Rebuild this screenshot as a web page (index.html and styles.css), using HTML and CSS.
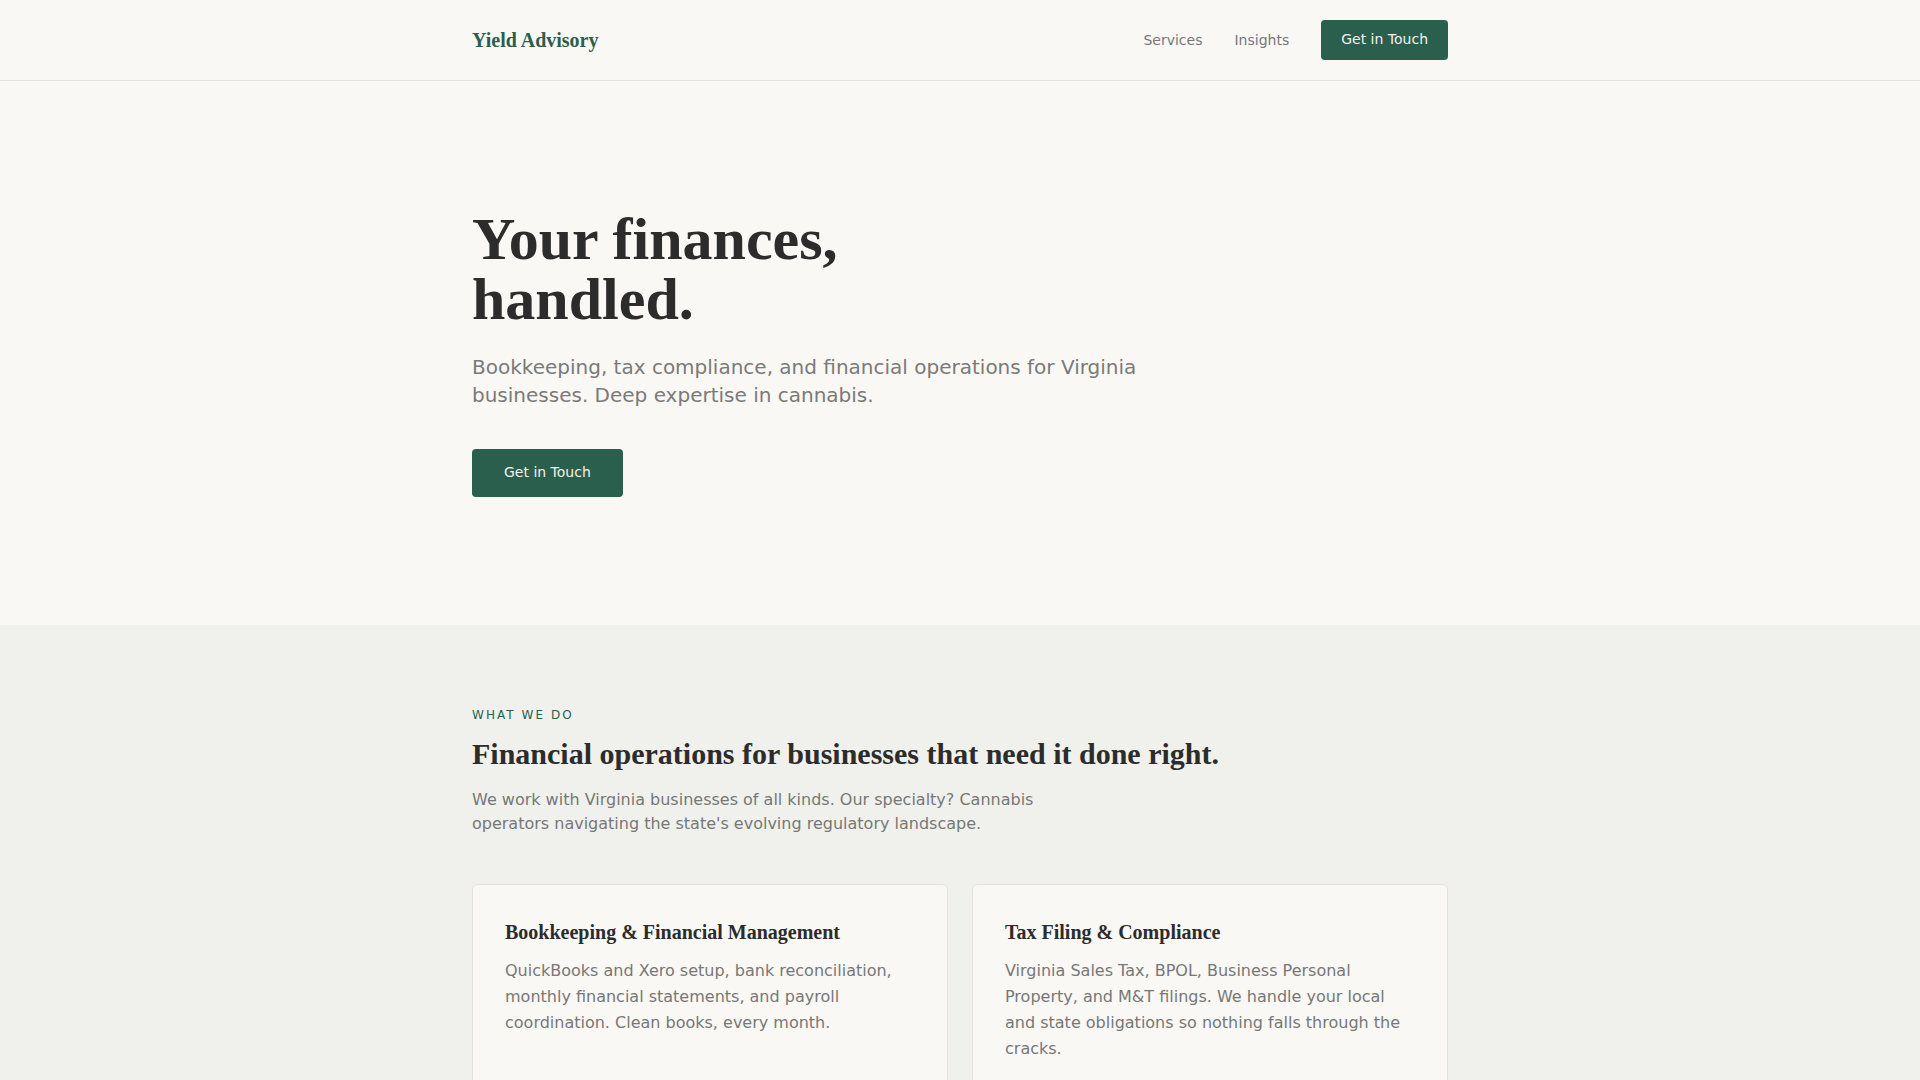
FILE: index.html
```html
<!DOCTYPE html>
<html lang="en">
<head>
<meta charset="utf-8">
<title>Yield Advisory</title>
<link rel="stylesheet" href="styles.css">
</head>
<body>
<header class="site-header">
  <div class="container header-inner">
    <a class="logo" href="#">Yield Advisory</a>
    <nav class="nav">
      <a class="nav-link" href="#">Services</a>
      <a class="nav-link" href="#">Insights</a>
      <a class="btn btn-sm" href="#">Get in Touch</a>
    </nav>
  </div>
</header>
<main>
  <section class="hero">
    <div class="container">
      <h1 class="hero-title">Your finances,<br>handled.</h1>
      <p class="hero-sub">Bookkeeping, tax compliance, and financial operations for Virginia businesses. Deep expertise in cannabis.</p>
      <a class="btn btn-lg" href="#">Get in Touch</a>
    </div>
  </section>
  <section class="services">
    <div class="container">
      <p class="eyebrow">WHAT WE DO</p>
      <h2 class="section-title">Financial operations for businesses that need it done right.</h2>
      <p class="section-intro">We work with Virginia businesses of all kinds. Our specialty? Cannabis operators navigating the state's evolving regulatory landscape.</p>
      <div class="cards">
        <div class="card">
          <h3 class="card-title">Bookkeeping &amp; Financial Management</h3>
          <p class="card-text">QuickBooks and Xero setup, bank reconciliation, monthly financial statements, and payroll coordination. Clean books, every month.</p>
        </div>
        <div class="card">
          <h3 class="card-title">Tax Filing &amp; Compliance</h3>
          <p class="card-text">Virginia Sales Tax, BPOL, Business Personal Property, and M&amp;T filings. We handle your local and state obligations so nothing falls through the cracks.</p>
        </div>
      </div>
    </div>
  </section>
</main>
</body>
</html>
```

FILE: styles.css
```css
* { box-sizing: border-box; }
html, body { margin: 0; padding: 0; }
body {
  background: #faf8f4;
  color: #2c2c2c;
  font-family: "DejaVu Sans", sans-serif;
}
a { text-decoration: none; }
.container {
  width: 976px;
  margin: 0 auto;
}
.site-header {
  border-bottom: 1px solid #e6e3dc;
  background: #faf8f4;
}
.header-inner {
  display: flex;
  align-items: center;
  justify-content: space-between;
  height: 80px;
}
.logo {
  font-family: "Liberation Serif", serif;
  font-weight: 700;
  font-size: 20px;
  color: #2b5f4d;
}
.nav {
  display: flex;
  align-items: center;
  gap: 32px;
}
.nav-link {
  font-size: 14px;
  color: #777;
}
.btn {
  display: inline-block;
  background: #2b5f4d;
  color: #f4f1ea;
  border-radius: 4px;
  font-size: 14px;
  line-height: 1.4;
}
.btn-sm { padding: 10px 20px; }
.btn-lg { padding: 14px 32px; }
.hero {
  padding: 128px 0;
}
.hero-title {
  margin: 0;
  font-family: "Liberation Serif", serif;
  font-weight: 700;
  font-size: 60px;
  line-height: 60px;
  color: #2c2c2c;
}
.hero-sub {
  margin: 24px 0 40px;
  max-width: 720px;
  font-size: 20px;
  line-height: 1.4;
  color: #7a7a7a;
}
.services {
  background: #f0f1ec;
  padding: 81px 0 80px;
}
.eyebrow {
  margin: 0;
  font-size: 12px;
  line-height: 18px;
  letter-spacing: 0.17em;
  color: #2b5f4d;
}
.section-title {
  margin: 12px 0 0;
  font-family: "Liberation Serif", serif;
  font-weight: 700;
  font-size: 30px;
  line-height: 36px;
  color: #2c2c2c;
}
.section-intro {
  margin: 16px 0 0;
  max-width: 600px;
  font-size: 16px;
  line-height: 24px;
  color: #777;
}
.cards {
  margin-top: 48px;
  display: grid;
  grid-template-columns: 1fr 1fr;
  gap: 24px;
}
.card {
  background: #faf8f4;
  border: 1px solid #e4e1da;
  border-radius: 6px;
  padding: 33px 32px 40px;
}
.card-title {
  margin: 0;
  font-family: "Liberation Serif", serif;
  font-weight: 700;
  font-size: 20px;
  line-height: 28px;
  color: #2c2c2c;
}
.card-text {
  margin: 12px 0 0;
  font-size: 16px;
  line-height: 26px;
  color: #777;
}
```
